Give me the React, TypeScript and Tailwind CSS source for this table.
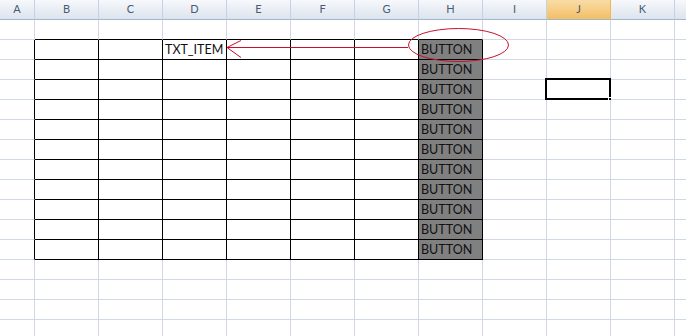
const COLS = ["A", "B", "C", "D", "E", "F", "G", "H", "I", "J", "K", ""];
const ROWS = 16;

// table occupies body rows 1..11 and columns B..H (1..7)
const inTable = (r: number, c: number) => r >= 1 && r <= 11 && c >= 1 && c <= 7;

function HeaderCell({ label, active }: { label: string; active: boolean }) {
  return (
    <div
      className={
        active
          ? "flex items-center justify-center h-5 border-r border-b border-r-[#f2b54f] border-b-[#9eb6ce] bg-gradient-to-b from-[#f9dca6] to-[#f2bf63] text-[11px] text-[#4a5a70]"
          : "flex items-center justify-center h-5 border-r border-b border-[#c5d1e0] border-b-[#9eb6ce] bg-gradient-to-b from-[#f6f8fb] to-[#dde4ee] text-[11px] text-[#4a5a70]"
      }
    >
      {label}
    </div>
  );
}

function Cell({ r, c }: { r: number; c: number }) {
  const table = inTable(r, c);
  const rightBlack = table || (c === 0 && r >= 1 && r <= 11);
  const bottomBlack = table || (r === 0 && c >= 1 && c <= 7);
  const button = table && c === 7;
  const text = button ? "BUTTON" : r === 1 && c === 3 ? "TXT_ITEM" : "";
  const selected = r === 3 && c === 9;

  return (
    <div
      className={[
        "relative flex items-end h-5 pl-[2px] pb-[1px] border-r border-b text-[12.5px] leading-[16px] text-[#111] whitespace-nowrap overflow-visible",
        rightBlack ? "border-r-black" : "border-r-[#d0d7e5]",
        bottomBlack ? "border-b-black" : "border-b-[#d0d7e5]",
        button ? "bg-[#808080]" : "bg-white",
      ].join(" ")}
    >
      {text}
      {selected && (
        <>
          <div className="absolute -left-[2px] -top-[2px] w-[66px] h-[22px] border-2 border-black" />
          <div className="absolute -right-[4px] -bottom-[4px] w-[6px] h-[6px] bg-black border border-white" />
        </>
      )}
    </div>
  );
}

export default function App() {
  return (
    <div
      className="relative w-[686px] h-[336px] overflow-hidden bg-white"
      style={{ fontFamily: "Lato, 'Liberation Sans', sans-serif" }}
    >
      <div className="grid grid-cols-[35px_repeat(10,64px)_64px] w-max">
        {COLS.map((label, c) => (
          <HeaderCell key={"h" + c} label={label} active={label === "J"} />
        ))}
        {Array.from({ length: ROWS }).map((_, r) =>
          COLS.map((_, c) => <Cell key={r + "-" + c} r={r} c={c} />)
        )}
      </div>

      <svg className="absolute left-0 top-0 pointer-events-none" width="686" height="336">
        <g stroke="#c8102e" strokeWidth="1" fill="none">
          <line x1="227" y1="47.5" x2="408" y2="47.5" />
          <line x1="227" y1="47.5" x2="241" y2="40.5" />
          <line x1="227" y1="47.5" x2="241" y2="57.5" />
          <ellipse cx="458.5" cy="45" rx="50" ry="16.5" />
        </g>
      </svg>
    </div>
  );
}
